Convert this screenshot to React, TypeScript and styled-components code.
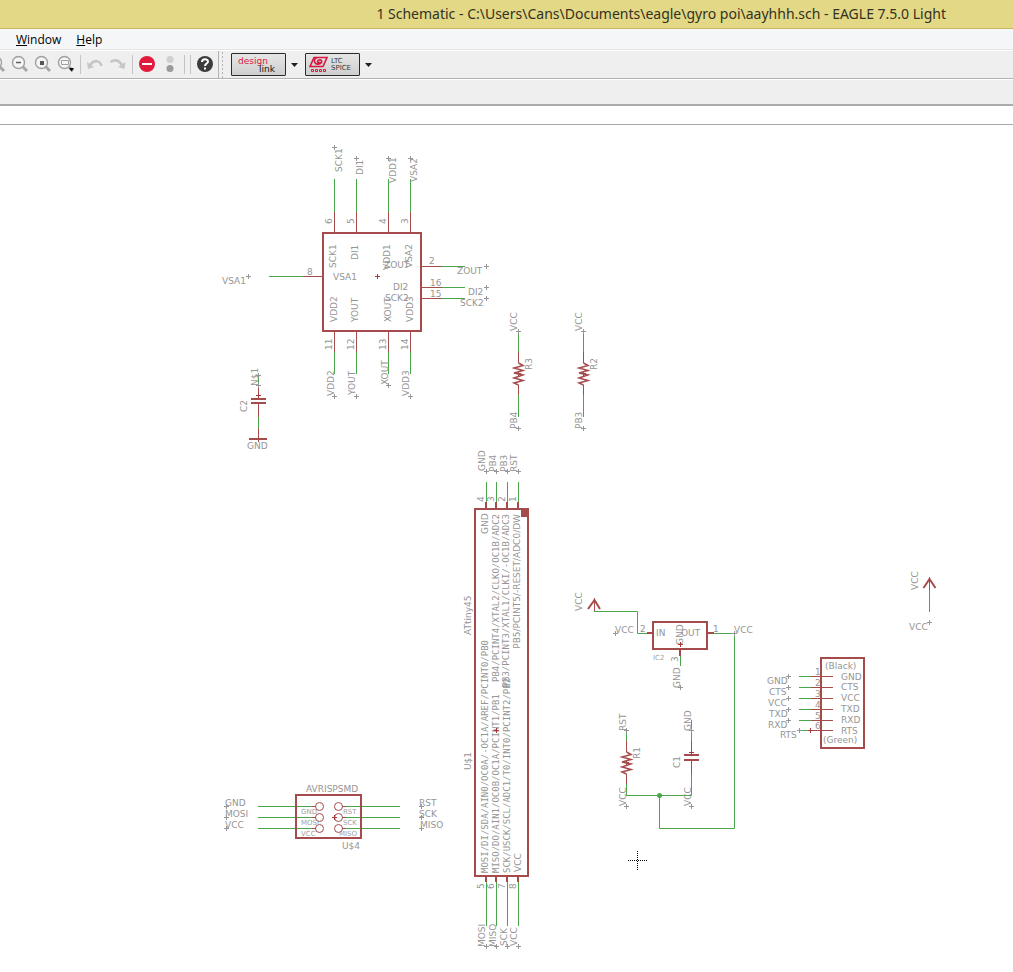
import React from 'react';
import styled, { createGlobalStyle } from 'styled-components';

const GlobalStyle = createGlobalStyle`
  * { box-sizing: border-box; }
  body { margin: 0; background: #ffffff; }
`;

const Window = styled.div`
  display: flex;
  flex-direction: column;
  min-height: 100vh;
  overflow: hidden;
  font-family: 'Open Sans', 'Noto Sans', sans-serif;
`;

const TitleBar = styled.header`
  display: flex;
  justify-content: flex-end;
  height: 29px;
  padding-right: 67px;
  background: #e3d886;
  border-bottom: 1px solid #c9b565;
`;

const Title = styled.h1`
  margin: 0;
  font-family: 'Noto Sans', sans-serif;
  font-size: 14px;
  font-weight: 400;
  line-height: 28px;
  white-space: nowrap;
  color: #33311f;
`;

const MenuBar = styled.nav`
  display: flex;
  gap: 15px;
  height: 22px;
  padding-left: 16px;
  background: #f5f6f8;
  border-bottom: 1px solid #ffffff;
  box-shadow: inset 0 -1px 0 #e4e4e6;
`;

const MenuButton = styled.button`
  padding: 0;
  border: 0;
  background: none;
  font-family: 'Open Sans', 'Noto Sans', sans-serif;
  font-size: 12px;
  line-height: 20px;
  color: #000000;
`;

const Toolbar = styled.div`
  display: flex;
  align-items: center;
  height: 28px;
  background: #efefef;
  border-bottom: 1px solid #b2b2b2;
`;

const ToolButton = styled.button<{ $clipped?: boolean }>`
  display: flex;
  flex: none;
  justify-content: flex-end;
  width: ${(p) => (p.$clipped ? 8 : 23)}px;
  height: 23px;
  padding: 0;
  border: 0;
  overflow: hidden;
  background: none;
`;

const ToolIcon = styled.svg`
  display: block;
  flex: none;
  width: 23px;
  height: 23px;
`;

const Separator = styled.span`
  flex: none;
  width: 6px;
  height: 19px;
  border-right: 2px solid #efefef;
  box-shadow: inset -1px 0 0 #c4c4c4;
`;

const Grip = styled.span`
  align-self: stretch;
  width: 6px;
  margin: 0 7px 0 2px;
  border-left: 1px solid #b2b2b2;
  background: radial-gradient(circle, #b4b4b4 1px, transparent 1px) 2px 0 / 3px 4px repeat-y;
`;

const LinkButton = styled.button`
  display: flex;
  align-items: center;
  width: 55px;
  height: 23px;
  padding: 0 6px 0 3px;
  border: 1px solid #2b2b2b;
  border-radius: 1px;
  background: linear-gradient(#e6e6e6, #cfcfcf);
  font-family: 'DejaVu Sans', sans-serif;
`;

const DesignLink = styled.span`
  display: flex;
  flex-direction: column;
  width: 100%;
  padding: 0 4px 0 3px;
  text-align: left;
  font-size: 9px;
  line-height: 9px;
  color: #d8173f;
`;

const LinkWord = styled.span`
  align-self: flex-end;
  line-height: 7px;
  color: #111111;
`;

const SpiceText = styled.span`
  padding-left: 3px;
  text-align: left;
  font-size: 7px;
  line-height: 7px;
  color: #3a3a3a;
`;

const SpiceMark = styled.svg`
  flex: none;
  width: 19px;
  height: 17px;
`;

const DropButton = styled.button`
  width: 19px;
  height: 23px;
  padding: 0 0 0 5px;
  border: 0;
  background: none;
  text-align: left;
  line-height: 0;
`;

const ParameterBar = styled.div`
  height: 27px;
  background: #efefef;
  border-top: 1px solid #ffffff;
  border-bottom: 2px solid #ababab;
`;

const CommandLine = styled.input`
  display: block;
  width: 100%;
  height: 19px;
  padding: 0 4px;
  border: 0;
  border-bottom: 1px solid #a8a8a8;
  outline: 0;
  background: #ffffff;
`;

const Sheet = styled.main`
  flex: 1;
  overflow: hidden;
  background: #ffffff;
`;

const Drawing = styled.svg`
  display: block;
  width: 1013px;
  height: 847px;
`;

const NetText = styled.text<{ $small?: boolean; $mono?: boolean }>`
  font-family: ${(p) => (p.$mono ? "'DejaVu Sans Mono', monospace" : "'DejaVu Sans', sans-serif")};
  font-size: ${(p) => (p.$small ? 7 : 9)}px;
  fill: ${(p) => (p.$small ? '#a2a2a2' : '#959595')};
`;

const Wire = styled.path<{ $red?: boolean; $thick?: boolean }>`
  fill: none;
  stroke: ${(p) => (p.$red ? '#a54b4b' : '#4ba54b')};
  stroke-width: ${(p) => (p.$thick ? 2 : 1)};
`;

const Zigzag = styled.path`
  fill: none;
  stroke: #a54b4b;
  stroke-width: 1.5;
`;

const Solid = styled.rect`
  fill: #a54b4b;
`;

const Outline = styled.rect`
  fill: none;
  stroke: #a54b4b;
  stroke-width: 2;
`;

const Origin = styled.path<{ $red?: boolean }>`
  stroke: ${(p) => (p.$red ? '#a83a3a' : '#969696')};
  fill: none;
`;

/* Horizontal labels: text, left edge, baseline. */
type Label = [string, number, number];

const flat: Label[] = [
  ['VSA1', 222, 284], ['8', 307, 275], ['VSA1', 333, 280], ['ZOUT', 384, 268],
  ['DI2', 393, 290], ['SCK2', 385, 301], ['2', 429, 264], ['16', 430, 286],
  ['15', 430, 297], ['ZOUT', 457, 274], ['DI2', 468, 295], ['SCK2', 460, 306],
  ['GND', 247, 449], ['VCC', 615, 633], ['2', 640, 632], ['IN', 656, 636],
  ['OUT', 681, 636], ['1', 713, 632], ['VCC', 734, 633], ['VCC', 909, 630],
  ['(Black)', 825, 669], ['(Green)', 823, 743],
  ['AVRISPSMD', 306, 792], ['U$4', 342, 849],
  ['GND', 225, 806], ['MOSI', 225, 817], ['VCC', 225, 828],
  ['RST', 419, 806], ['SCK', 419, 817], ['MISO', 420, 828],
];

const small: Label[] = [
  ['IC2', 653, 660], ['GND', 301, 814], ['MOSI', 301, 825], ['VCC', 301, 836],
  ['RST', 343, 814], ['SCK', 343, 825], ['MISO', 339, 836],
];

/* Labels that read upwards: text, baseline, bottom edge. */
const upright: Label[] = [
  ['SCK1', 342, 172], ['DI1', 363, 175], ['VDD1', 396, 183], ['VSA2', 417, 182],
  ['6', 332, 224], ['5', 354, 224], ['4', 386, 224], ['3', 408, 224],
  ['SCK1', 336, 268], ['DI1', 358, 260], ['VDD1', 390, 270], ['VSA2', 412, 268],
  ['VDD2', 337, 322], ['YOUT', 358, 322], ['XOUT', 391, 322], ['VDD3', 413, 322],
  ['11', 332, 350], ['12', 354, 350], ['13', 386, 350], ['14', 408, 350],
  ['VDD2', 334, 396], ['YOUT', 355, 395], ['XOUT', 388, 385], ['VDD3', 409, 396],
  ['N$1', 258, 386], ['C2', 247, 412],
  ['VCC', 517, 331], ['R3', 532, 370], ['PB4', 517, 429],
  ['VCC', 582, 331], ['R2', 597, 370], ['PB3', 582, 429],
  ['GND', 485, 471], ['PB4', 496, 472], ['PB3', 507, 472], ['RST', 517, 472],
  ['4', 484, 502], ['3', 494, 502], ['2', 505, 502], ['1', 516, 502],
  ['GND', 488, 534], ['ATtiny45', 471, 635], ['U$1', 471, 770],
  ['VCC', 521, 872],
  ['5', 484, 889], ['6', 494, 889], ['7', 505, 889], ['8', 516, 889],
  ['MOSI', 485, 947], ['MISO', 496, 947], ['SCK', 507, 946], ['VCC', 517, 946],
  ['VCC', 582, 611], ['GND', 683, 645], ['3', 678, 662], ['GND', 680, 688],
  ['RST', 626, 731], ['R1', 640, 759], ['VCC', 626, 806],
  ['GND', 691, 731], ['C1', 680, 768], ['VCC', 691, 806], ['VCC', 918, 590],
];

/* Controller pin functions, rising from the lower edge. */
const rising: Label[] = [
  ['MOSI/DI/SDA/AIN0/OC0A/-OC1A/AREF/PCINT0/PB0', 488, 873],
  ['MISO/DO/AIN1/OC0B/OC1A/PCINT1/PB1', 499, 873],
  ['SCK/USCK/SCL/ADC1/T0/INT0/PCINT2/PB2', 510, 873],
];

/* Controller pin functions, ending at the upper edge. */
const hanging: Label[] = [
  ['PB4/PCINT4/XTAL2/CLKO/OC1B/ADC2', 499, 514],
  ['PB3/PCINT3/XTAL1/CLKI/-OC1B/ADC3', 509, 514],
];

const grayOrigins: [number, number][] = [
  [334, 147], [356, 158], [388, 158], [410, 158], [248, 276], [486, 266], [486, 287],
  [486, 298], [334, 396], [356, 396], [388, 385], [410, 396], [258, 375], [258, 385],
  [518, 331], [583, 331], [518, 428], [583, 428], [486, 471], [496, 471], [507, 471],
  [518, 471], [486, 946], [496, 946], [507, 946], [518, 946], [615, 633], [734, 633],
  [680, 687], [626, 730], [691, 730], [626, 806], [691, 806], [929, 622], [799, 730],
  [226, 806], [226, 817], [226, 828], [421, 806], [421, 817], [421, 828],
];

const redOrigins: [number, number][] = [
  [377, 276], [258, 395], [496, 730], [680, 644], [691, 752], [810, 730], [334, 817],
];

const headerPins = [
  { name: 'GND', y: 676, left: 767, right: 680 },
  { name: 'CTS', y: 687, left: 769, right: 690 },
  { name: 'VCC', y: 698, left: 768, right: 701 },
  { name: 'TXD', y: 709, left: 769, right: 712 },
  { name: 'RXD', y: 720, left: 768, right: 723 },
  { name: 'RTS', y: 730, left: 780, right: 734 },
];

const cross = (x: number, y: number) => `M${x - 2} ${y + 0.5}h5M${x + 0.5} ${y - 2}v5`;

const Up = ({ label, end, mono }: { label: Label; end?: boolean; mono?: boolean }) => (
  <NetText
    $mono={mono}
    textAnchor={end ? 'end' : 'start'}
    transform={`translate(${label[1]} ${label[2]}) rotate(-90)`}
  >
    {label[0]}
  </NetText>
);

const Resistor = ({ x, y, lower }: { x: number; y: number; lower: number }) => (
  <g transform={`translate(${x} ${y})`}>
    <Wire d={`M.5 -11V0M.5 43V${lower}`} />
    <Wire $red d="M.5 0V11M.5 33V43M-2 21.5H3M.5 19V24" />
    <Zigzag d="M.5 11L5 13.5L-4 16L5 18.5L-4 21L5 23L-4 26L5 28.5L-4 31L.5 33" />
  </g>
);

const Schematic = () => (
  <Drawing viewBox="0 125 1013 847" role="img" aria-label="Schematic sheet">
    {/* accelerometer */}
    <Wire d="M334.5 179V212M356.5 179V212M388.5 179V212M410.5 179V212M334.5 352V374M356.5 352V374M388.5 352V374M410.5 352V374M269 276.5H303M442 266.5H465M442 287.5H465M442 298.5H465" />
    <Wire $red d="M334.5 212V232M356.5 212V232M388.5 212V232M410.5 212V232M334.5 332V352M356.5 332V352M388.5 332V352M410.5 332V352M303 276.5H322M422 266.5H442M422 287.5H442M422 298.5H442" />
    <Outline x="323" y="233" width="98" height="98" />

    {/* C2 */}
    <Wire d="M258.5 374V387M258.5 417V428" />
    <Wire $red d="M258.5 387V398M258.5 404V417M258.5 428V442" />
    <Solid x="251" y="398" width="15" height="2" />
    <Solid x="251" y="402" width="15" height="2" />
    <Solid x="249" y="438" width="18" height="2" />

    <Resistor x={518} y={352} lower={65} />
    <Resistor x={583} y={352} lower={65} />
    <Wire d="M518.5 331V342M583.5 331V342" />

    {/* ATtiny45 */}
    <Wire d="M486.5 482V505M496.5 482V505M507.5 482V505M518.5 482V505M486.5 880V926M496.5 880V926M507.5 880V926M518.5 880V926" />
    <Wire $red $thick d="M486 502V508M496 502V508M507 502V508M518 502V508M486 877V882M496 877V882M507 877V882M518 877V882" />
    <Outline x="475" y="509" width="53" height="367" />
    <Solid x="521" y="509" width="7" height="8" />

    {/* regulator and its supply nets */}
    <Wire d="M594 611.5H637.5V633.5H648M713 633.5H734.5V828.5H659.5V795.5M680.5 655V666M626.5 795.5H691.5V774M691.5 720V741" />
    <Resistor x={626} y={741} lower={55} />
    <Wire $red d="M691.5 741V754M691.5 761V774" />
    <Wire $red $thick d="M588 609L594.5 600L600 609M647 633H652M708 633H714M680 650V656" />
    <Wire $red d="M594.5 598V611" />
    <Outline x="653" y="622" width="54" height="27" />
    <Solid x="684" y="754" width="15" height="2" />
    <Solid x="684" y="759" width="15" height="2" />
    <circle cx="659.5" cy="795.5" r="2.5" fill="#4ba54b" />

    {/* supply arrow */}
    <Wire d="M929.5 590V612" />
    <Wire $red d="M929.5 577V590" />
    <Wire $red $thick d="M923.5 588L929.5 579L935.5 588" />

    {/* serial header */}
    <Outline x="821" y="658" width="43" height="90" />
    {headerPins.map((pin, i) => (
      <g key={pin.name}>
        <Wire d={`M799 ${pin.y + 0.5}H811`} />
        <Wire $red d={`M811 ${pin.y + 0.5}H833`} />
        <NetText x={815} y={pin.y - 1}>{i + 1}</NetText>
        <NetText x={pin.left} y={pin.y + 8}>{pin.name}</NetText>
        <NetText x={841} y={pin.right}>{pin.name}</NetText>
        {i < 5 && <Origin d={cross(788, pin.y)} />}
      </g>
    ))}

    {/* programming header */}
    {[806, 817, 828].map((y) => (
      <g key={y}>
        <Wire d={`M258 ${y + 0.5}H312M346 ${y + 0.5}H400`} />
        <Wire $red d={`M312 ${y + 0.5}H316M342 ${y + 0.5}H346`} />
        <circle cx="319.5" cy={y + 0.5} r="4" fill="none" stroke="#a54b4b" />
        <circle cx="338.5" cy={y + 0.5} r="4" fill="none" stroke="#a54b4b" />
      </g>
    ))}
    <Outline x="296" y="795" width="65" height="43" />

    {flat.map((l, i) => (
      <NetText key={i} x={l[1]} y={l[2]}>{l[0]}</NetText>
    ))}
    {small.map((l, i) => (
      <NetText $small key={i} x={l[1]} y={l[2]}>{l[0]}</NetText>
    ))}
    {upright.map((l, i) => (
      <Up key={i} label={l} />
    ))}
    {rising.map((l, i) => (
      <Up key={i} label={l} mono />
    ))}
    {hanging.map((l, i) => (
      <Up key={i} label={l} end mono />
    ))}
    <Up label={['PB5/PCINT5/-RESET/ADC0/DW', 520, 514]} end />
    <Origin d={grayOrigins.map(([x, y]) => cross(x, y)).join('')} />
    <Origin $red d={redOrigins.map(([x, y]) => cross(x, y)).join('')} />

    {/* crosshair cursor */}
    <path d="M628 860.5H647M637.5 851V870" stroke="#000000" strokeDasharray="1 1" />
  </Drawing>
);

const Magnifier = ({ children }: { children?: React.ReactNode }) => (
  <ToolIcon viewBox="0 0 23 23" fill="none">
    <circle cx="10.5" cy="9.5" r="6" fill="#f5f5f5" stroke="#a0a0a0" strokeWidth="1.4" />
    <path d="M14.8 13.8L19 18" stroke="#a6a6a6" strokeWidth="3" />
    {children}
  </ToolIcon>
);

const DropArrow = () => (
  <svg width="7" height="4" viewBox="0 0 7 4">
    <path d="M0 0H7L3.5 4Z" fill="#202020" />
  </svg>
);

export default function App() {
  return (
    <>
      <GlobalStyle />
      <Window>
        <TitleBar>
          <Title>1 Schematic - C:\Users\Cans\Documents\eagle\gyro poi\aayhhh.sch - EAGLE 7.5.0 Light</Title>
        </TitleBar>
        <MenuBar>
          <MenuButton><u>W</u>indow</MenuButton>
          <MenuButton><u>H</u>elp</MenuButton>
        </MenuBar>
        <Toolbar>
          <ToolButton $clipped aria-label="Zoom in"><Magnifier /></ToolButton>
          <ToolButton aria-label="Zoom out">
            <Magnifier><path d="M8 9.5H13" stroke="#606060" strokeWidth="1.5" /></Magnifier>
          </ToolButton>
          <ToolButton aria-label="Redraw">
            <Magnifier><path d="M9 8H13V12H9Z" fill="#555555" /></Magnifier>
          </ToolButton>
          <ToolButton aria-label="Zoom select">
            <Magnifier>
              <path d="M7.5 7.5H14.5V11.5H7.5Z" stroke="#a0a0a0" />
              <path d="M15 15H20L17.5 18.5Z" fill="#000000" />
            </Magnifier>
          </ToolButton>
          <Separator />
          <ToolButton aria-label="Undo">
            <ToolIcon viewBox="0 0 23 23" fill="none">
              <path d="M18.5 13C17 7 11 6.5 7 12" stroke="#c6c6c6" strokeWidth="2.6" />
              <path d="M4 9L5 16L11 14Z" fill="#c6c6c6" />
            </ToolIcon>
          </ToolButton>
          <ToolButton aria-label="Redo">
            <ToolIcon viewBox="0 0 23 23" fill="none">
              <path d="M4.5 9C9 6 13 7.5 16 12" stroke="#c6c6c6" strokeWidth="2.6" />
              <path d="M19.5 9L18.5 16L12 14Z" fill="#c6c6c6" />
            </ToolIcon>
          </ToolButton>
          <Separator />
          <ToolButton aria-label="Stop">
            <ToolIcon viewBox="0 0 23 23">
              <circle cx="12" cy="11" r="8" fill="#e01b3c" />
              <path d="M7 10H17V12H7Z" fill="#ffffff" />
            </ToolIcon>
          </ToolButton>
          <ToolButton aria-label="Go">
            <ToolIcon viewBox="0 0 23 23">
              <circle cx="12" cy="6.5" r="3.5" fill="#cfcfcf" />
              <circle cx="12" cy="15.5" r="3.5" fill="#9b9b9b" />
            </ToolIcon>
          </ToolButton>
          <Separator />
          <Separator />
          <ToolButton aria-label="Help">
            <ToolIcon viewBox="0 0 23 23" fill="none">
              <circle cx="12" cy="11" r="8" fill="#3c3c3c" />
              <path d="M9 9C9 5.5 15 5.5 15 8.5C15 10.5 12 10.5 12 13" stroke="#ffffff" strokeWidth="2" />
              <path d="M11 14.5H13V16.5H11Z" fill="#ffffff" />
            </ToolIcon>
          </ToolButton>
          <Grip />
          <LinkButton>
            <DesignLink>
              design
              <LinkWord>link</LinkWord>
            </DesignLink>
          </LinkButton>
          <DropButton aria-label="Design link menu"><DropArrow /></DropButton>
          <LinkButton>
            <SpiceMark viewBox="0 0 19 17" fill="none" stroke="#d8173f">
              <path d="M5 1.5H18L14 10.5H1Z" strokeWidth="1.6" />
              <path d="M8 1.5C3 4 6 9 10 8C14 7 13 3 10 4C7 5 9 8 11 6" strokeWidth="1.6" />
              <path d="M2.5 13.5h2v2h-2zM6.5 13.5h2v2h-2zM10.5 13.5h2v2h-2zM14.5 13.5h2v2h-2z" />
            </SpiceMark>
            <SpiceText>LTC<br />SPICE</SpiceText>
          </LinkButton>
          <DropButton aria-label="LTC Spice menu"><DropArrow /></DropButton>
        </Toolbar>
        <ParameterBar />
        <CommandLine aria-label="Command line" />
        <Sheet>
          <Schematic />
        </Sheet>
      </Window>
    </>
  );
}
